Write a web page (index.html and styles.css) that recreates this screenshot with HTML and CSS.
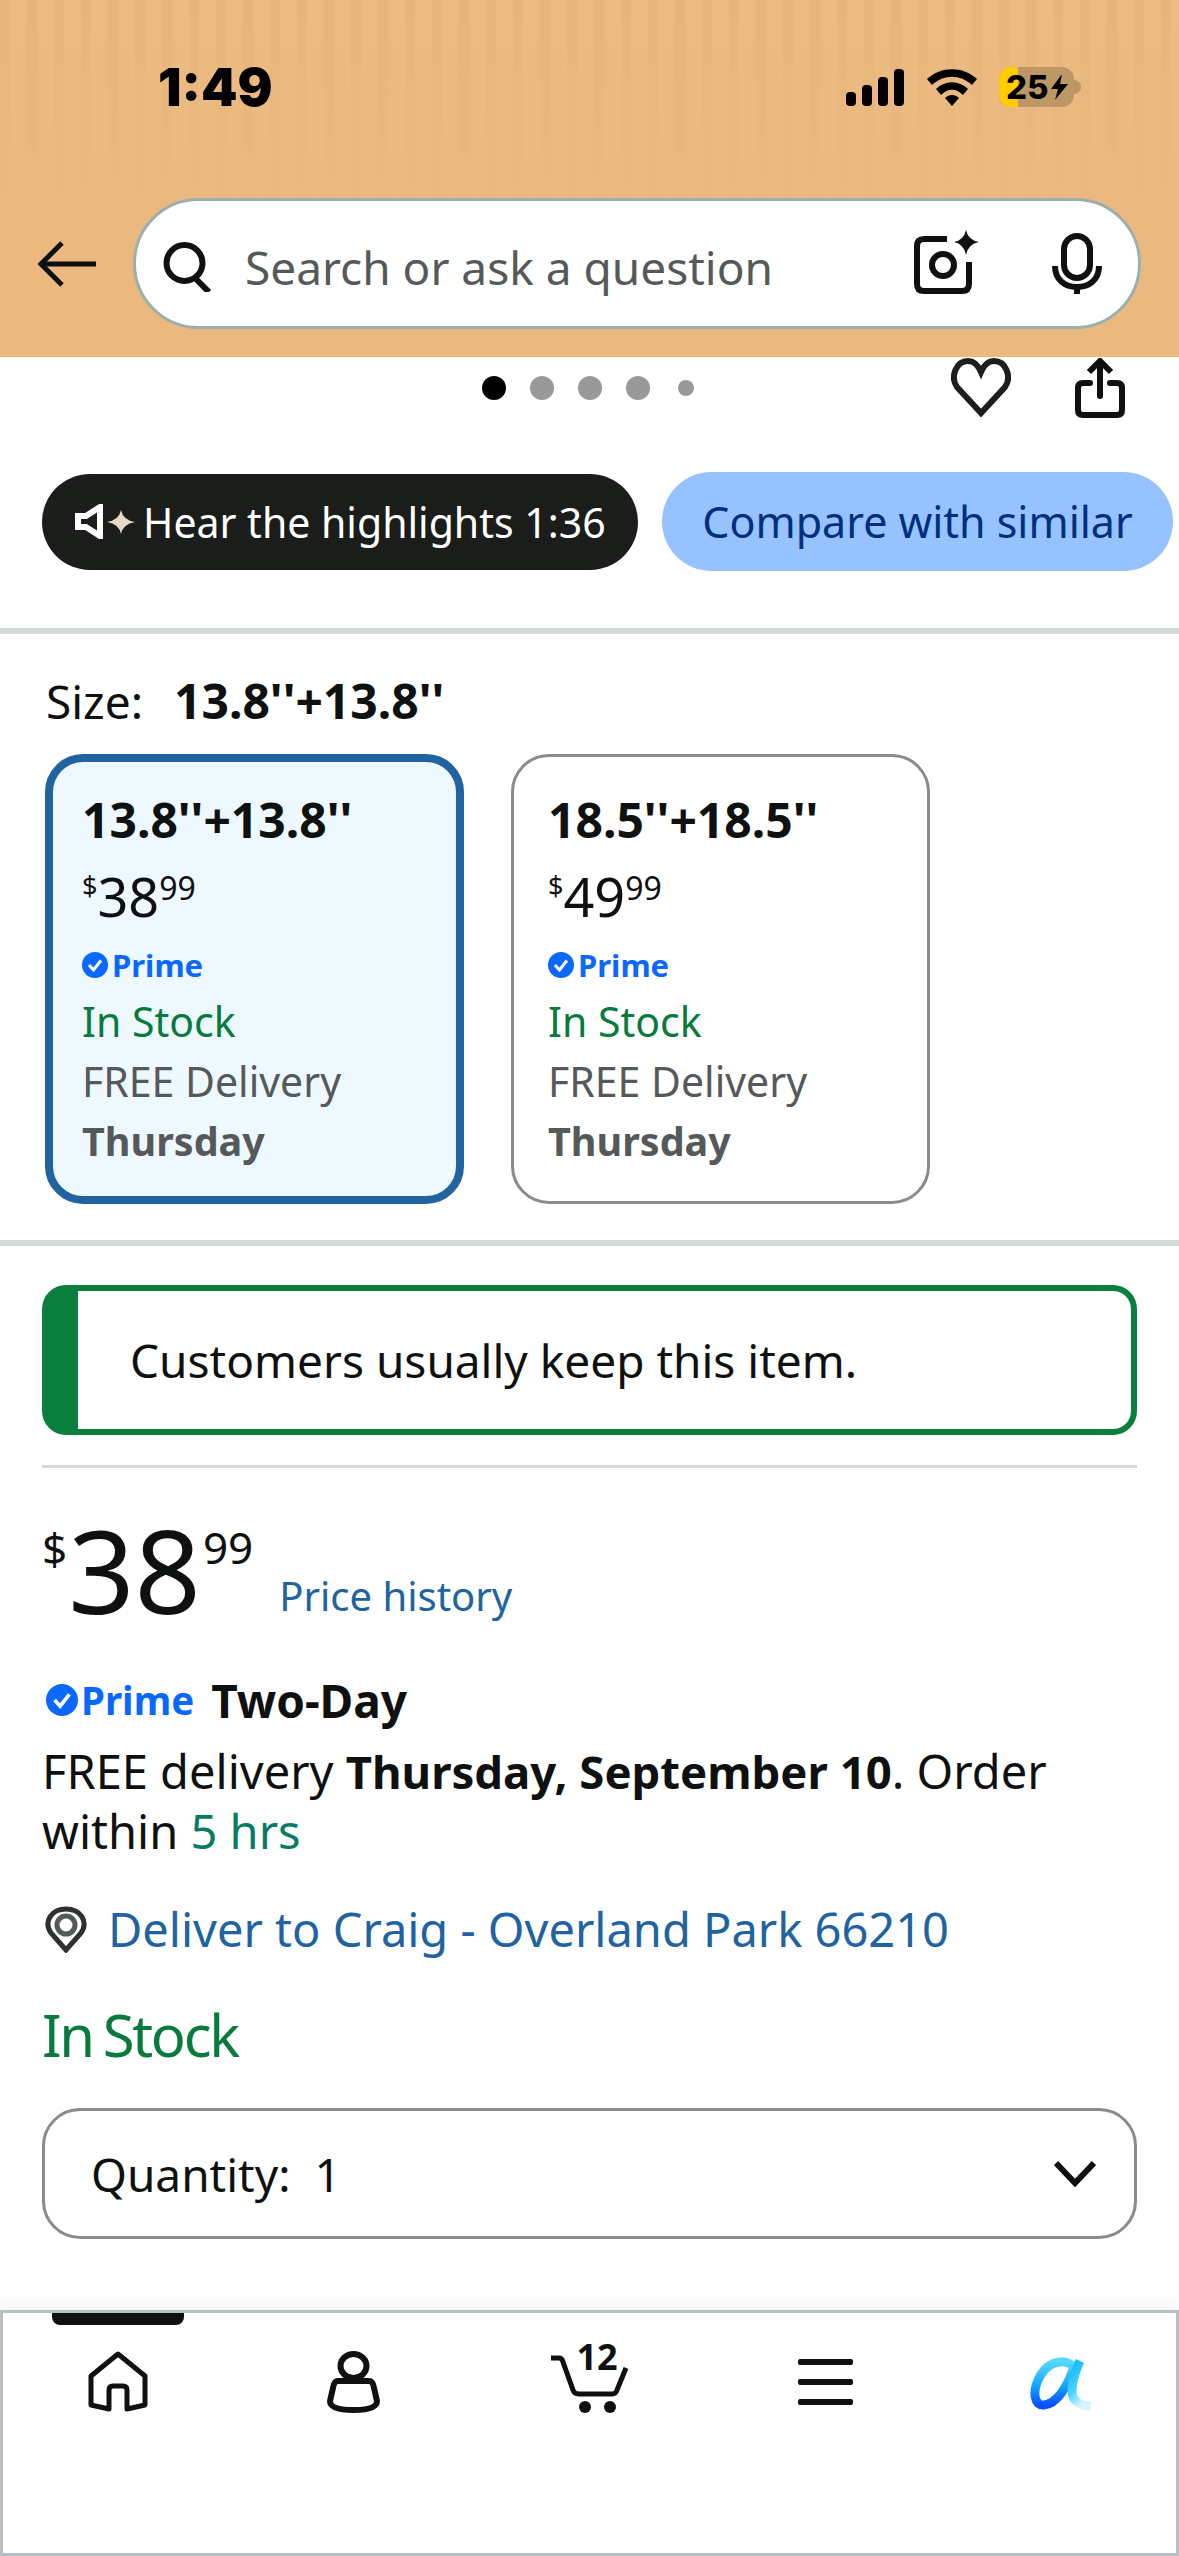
FILE: index.html
```html
<!DOCTYPE html>
<html lang="en">
<head>
    <meta charset="UTF-8">
    <meta name="viewport" content="width=device-width, initial-scale=1.0">
    <title>Product detail</title>
    <link rel="stylesheet" href="styles.css">
</head>
<body>
    <div class="page">
        <header class="top">
            <div class="status">
                <span class="time">1:49</span>
                <div class="status-icons">
                    <svg class="signal" width="58" height="37" viewBox="0 0 58 37"><rect x="0" y="23" width="10" height="14" rx="4"/><rect x="16" y="16" width="10" height="21" rx="4"/><rect x="32" y="8" width="10" height="29" rx="4"/><rect x="48" y="0" width="10" height="37" rx="4"/></svg>
                    <svg class="wifi" width="50" height="37" viewBox="0 0 50 37"><path d="M0 10 C14 -3 36 -3 50 10 L45 16 C33 5 17 5 5 16 Z"/><path d="M9 20 C18 11 32 11 41 20 L36 26 C29 19 21 19 14 26 Z"/><path d="M18 29 C22 25 28 25 32 29 L25 37 Z"/></svg>
                    <div class="battery">
                        <span class="battery-level"></span>
                        <span class="battery-text">25</span>
                        <svg class="bolt" width="17" height="26" viewBox="0 0 17 26"><path d="M11 0 L0 15 H7 L4 26 L17 10 H9 Z"/></svg>
                    </div>
                    <span class="battery-cap"></span>
                </div>
            </div>
            <div class="search-row">
                <svg class="back" width="59" height="46" viewBox="0 0 59 46" fill="none" stroke="#0f1111" stroke-width="5"><path d="M59 23 H5"/><path d="M25 2 L4 23 L25 44"/></svg>
                <div class="search-bar">
                    <svg class="search-icon" width="53" height="50" viewBox="0 0 53 50" fill="none" stroke="#0f1111" stroke-width="6"><circle cx="21.5" cy="21" r="18"/><path d="M32 36 L46 50"/></svg>
                    <span class="search-text">Search or ask a question</span>
                    <svg class="camera" width="65" height="64" viewBox="0 0 65 64" fill="none" stroke="#0f1111" stroke-width="6"><path d="M33 9 H10 Q3 9 3 16 V54 Q3 61 10 61 H48 Q55 61 55 54 V32"/><circle cx="29" cy="35" r="11"/><path d="M52 0 Q54 10 65 12 Q54 14 52 25 Q50 14 40 12 Q50 10 52 0 Z" fill="#0f1111" stroke="none"/></svg>
                    <svg class="mic" width="50" height="61" viewBox="0 0 50 61" fill="none" stroke="#0f1111" stroke-width="6"><rect x="12" y="3" width="26" height="42" rx="13"/><path d="M3 33 C3 47 13 54 25 54 C37 54 47 47 47 33"/><path d="M25 52 V61"/></svg>
                </div>
            </div>
        </header>

        <main class="content">
            <div class="actions">
                <div class="dots">
                    <span class="dot dot-active"></span>
                    <span class="dot"></span>
                    <span class="dot"></span>
                    <span class="dot"></span>
                    <span class="dot dot-small"></span>
                </div>
                <svg class="heart" width="60" height="60" viewBox="0 0 60 60" fill="none" stroke="#1c1e1e" stroke-width="6"><path d="M30 55 L6 29 C-1 19 5 3 17 3 C23 3 27 7 30 14 C33 7 37 3 43 3 C55 3 61 19 54 29 Z"/></svg>
                <svg class="share" width="50" height="60" viewBox="0 0 50 60" fill="none" stroke="#0f1111" stroke-width="6" stroke-linecap="round"><path d="M15 25 H8 Q3 25 3 30 V52 Q3 57 8 57 H42 Q47 57 47 52 V30 Q47 25 42 25 H35"/><path d="M25 5 V38"/><path d="M14 14 L25 3 L36 14" stroke-linecap="butt"/></svg>
            </div>

            <div class="pills">
                <div class="pill pill-dark">
                    <svg width="60" height="35" viewBox="0 0 60 35"><path d="M3 12 H11 L25 3 V32 L11 23 H3 Z" fill="none" stroke="#fff" stroke-width="6"/><path d="M46 6 Q48 16 60 18 Q48 20 46 30 Q44 20 32 18 Q44 16 46 6 Z" fill="#e8d9c6"/></svg>
                    <span>Hear the highlights 1:36</span>
                </div>
                <div class="pill pill-blue">Compare with similar</div>
            </div>

            <div class="divider"></div>

            <div class="size-row"><span>Size:</span><b>13.8''+13.8''</b></div>

            <div class="cards">
                <div class="card card-selected">
                    <div class="card-title">13.8''+13.8''</div>
                    <div class="card-price"><span class="cur">$</span><span>38</span><span class="cents">99</span></div>
                    <div class="prime prime-small"><svg width="26" height="26" viewBox="0 0 26 26"><circle cx="13" cy="13" r="13" fill="#0a68ff"/><path d="M7 13 L11.5 18 L19 8.5" fill="none" stroke="#fff" stroke-width="3"/></svg><span>Prime</span></div>
                    <div class="card-stock">In Stock</div>
                    <div class="card-line">FREE Delivery</div>
                    <div class="card-line card-day">Thursday</div>
                </div>
                <div class="card">
                    <div class="card-title">18.5''+18.5''</div>
                    <div class="card-price"><span class="cur">$</span><span>49</span><span class="cents">99</span></div>
                    <div class="prime prime-small"><svg width="26" height="26" viewBox="0 0 26 26"><circle cx="13" cy="13" r="13" fill="#0a68ff"/><path d="M7 13 L11.5 18 L19 8.5" fill="none" stroke="#fff" stroke-width="3"/></svg><span>Prime</span></div>
                    <div class="card-stock">In Stock</div>
                    <div class="card-line">FREE Delivery</div>
                    <div class="card-line card-day">Thursday</div>
                </div>
            </div>

            <div class="divider divider-cards"></div>

            <div class="section">
                <div class="notice">Customers usually keep this item.</div>
                <div class="rule"></div>

                <div class="price-row">
                    <span class="price-cur">$</span>
                    <span class="price-main">38</span>
                    <span class="price-cents">99</span>
                    <span class="price-link">Price history</span>
                </div>

                <div class="prime-row">
                    <div class="prime prime-large"><svg width="32" height="32" viewBox="0 0 26 26"><circle cx="13" cy="13" r="13" fill="#0a68ff"/><path d="M7 13 L11.5 18 L19 8.5" fill="none" stroke="#fff" stroke-width="3"/></svg><span>Prime</span></div>
                    <b>Two-Day</b>
                </div>
                <p class="delivery"><span>FREE delivery </span><b>Thursday, September 10</b><span>. Order </span><span>within </span><span class="hrs">5 hrs</span></p>

                <div class="deliver-to">
                    <svg width="42" height="47" viewBox="0 0 42 47" fill="none"><path d="M21 44 L6 27 C-2 15 7 3 21 3 C35 3 44 15 36 27 Z" stroke="#2f3131" stroke-width="5"/><circle cx="21" cy="19" r="9" stroke="#565959" stroke-width="5"/></svg>
                    <span>Deliver to Craig - Overland Park 66210</span>
                </div>

                <div class="stock">In Stock</div>

                <div class="quantity">
                    <span>Quantity:&nbsp; 1</span>
                    <svg width="42" height="27" viewBox="0 0 42 27" fill="none" stroke="#0f1111" stroke-width="6"><path d="M2 3 L21 23 L40 3"/></svg>
                </div>
            </div>
        </main>

        <nav class="tabs">
            <div class="tab">
                <span class="tab-marker"></span>
                <svg width="60" height="61" viewBox="0 0 60 61" fill="none" stroke="#0f1111" stroke-width="5" stroke-linejoin="round"><path d="M30 3 L3 25 V54 L21 58 V39 Q21 35 25 35 H35 Q39 35 39 39 V58 L57 54 V25 Z"/></svg>
            </div>
            <div class="tab">
                <svg width="53" height="62" viewBox="0 0 53 62" fill="none" stroke="#0f1111" stroke-width="6"><ellipse cx="26.5" cy="15" rx="13" ry="12"/><path d="M11 30 H42 Q46 30 47 37 L50 50 Q50 59 26.5 59 Q3 59 3 50 L6 37 Q7 30 11 30 Z"/></svg>
            </div>
            <div class="tab">
                <div class="cart">
                    <svg width="78" height="60" viewBox="0 0 78 60" fill="none" stroke="#0f1111" stroke-width="5"><path d="M1 5 H9 Q12 5 13 9 L23 37 Q24 41 29 41 H62 Q66 41 67 37 L76 15"/><circle cx="35" cy="54" r="6" fill="#0f1111" stroke="none"/><circle cx="60" cy="54" r="6" fill="#0f1111" stroke="none"/></svg>
                    <span class="cart-count">12</span>
                </div>
            </div>
            <div class="tab">
                <svg class="menu-icon" width="55" height="46" viewBox="0 0 55 46" fill="#0f1111"><rect width="55" height="6" rx="2"/><rect y="20" width="55" height="6" rx="2"/><rect y="40" width="55" height="6" rx="2"/></svg>
            </div>
            <div class="tab">
                <svg class="alpha-icon" width="64" height="54" viewBox="0 0 64 54" fill="none" stroke-width="9">
                    <defs>
                        <linearGradient id="bowl" x1="0" y1="0" x2="0" y2="1"><stop offset="0" stop-color="#55d9ff"/><stop offset=".55" stop-color="#13a5ff"/><stop offset="1" stop-color="#0a50ff"/></linearGradient>
                        <linearGradient id="tail" x1="0" y1="0" x2="0.4" y2="1"><stop offset="0" stop-color="#0fb6ff"/><stop offset=".6" stop-color="#46d4ff"/><stop offset="1" stop-color="#d6f5ff"/></linearGradient>
                    </defs>
                    <path d="M47 15 C43 3 22 1 11 20 C2 37 6 50 15 49 C27 48 39 32 46 7" stroke="url(#bowl)"/>
                    <path d="M51 5 C44 20 40 38 46 44 C50 49 56 50 62 50" stroke="url(#tail)"/>
                </svg>
            </div>
        </nav>
    </div>
</body>
</html>
```
FILE: styles.css
```css
* {
    box-sizing: border-box;
}
html, body {
    margin: 0;
    padding: 0;
}
body {
    font-family: "Noto Sans", Arial, sans-serif;
    color: #0f1111;
    background: white;
}
svg {
    display: block;
    flex: none;
}
.page {
    width: 1179px;
    height: 2556px;
    display: flex;
    flex-direction: column;
    overflow: hidden;
}

/* header */
.top {
    height: 357px;
    padding-top: 65px;
    background:
        linear-gradient(to bottom, rgba(235,185,127,0) 0, rgba(235,185,127,0.4) 90px, #ebb97f 210px),
        repeating-linear-gradient(90deg, #e7b67d 0, #e7b67d 10px, #ecbb82 10px, #ecbb82 27px),
        #ebb97f;
}
.status {
    height: 46px;
    display: flex;
    align-items: center;
    padding-left: 158px;
}
.time {
    font-family: "Inter", sans-serif;
    font-weight: 900;
    font-size: 52px;
    line-height: 46px;
    color: black;
}
.status-icons {
    margin-left: auto;
    margin-top: -2px;
    padding-right: 98px;
    display: flex;
    align-items: center;
}
.signal {
    margin-right: 23px;
}
.wifi {
    margin-right: 22px;
}
.battery {
    position: relative;
    width: 75px;
    height: 40px;
    border-radius: 12px;
    background: #be9767;
    overflow: hidden;
    display: flex;
    align-items: center;
    padding-left: 7px;
}
.battery-level {
    position: absolute;
    left: 0;
    top: 0;
    width: 19px;
    height: 40px;
    background: #ffcc00;
}
.battery-text {
    position: relative;
    font-family: "Inter", sans-serif;
    font-weight: 800;
    font-size: 33px;
    line-height: 40px;
    color: black;
}
.bolt {
    position: relative;
    margin-left: 2px;
}
.battery-cap {
    width: 7px;
    height: 14px;
    border-radius: 0 7px 7px 0;
    background: #be9767;
}
.search-row {
    margin-top: 87px;
    display: flex;
    align-items: center;
    padding-left: 37px;
}
.back {
    margin-right: 37px;
}
.search-bar {
    width: 1008px;
    height: 131px;
    background: white;
    border: 3px solid #9ab0b0;
    border-radius: 66px;
    display: flex;
    align-items: center;
    padding: 0 36px 0 27px;
}
.search-icon {
    margin-top: 6px;
}
.search-text {
    flex: 1;
    margin-left: 29px;
    padding-top: 6px;
    font-size: 46px;
    color: #565959;
}
.camera {
    margin-right: 73px;
    margin-top: -4px;
}

/* gallery actions */
.actions {
    height: 61px;
    display: flex;
    align-items: flex-start;
    padding-left: 482px;
    padding-right: 54px;
}
.dots {
    height: 61px;
    display: flex;
    align-items: center;
    gap: 24px;
    margin-right: auto;
}
.dot {
    width: 24px;
    height: 24px;
    border-radius: 50%;
    background: #97999b;
}
.dot-active {
    background: black;
}
.dot-small {
    width: 16px;
    height: 16px;
    margin-left: 4px;
}
.heart {
    margin-top: 1px;
    margin-right: 64px;
}
.share {
    margin-top: 1px;
}
.pills {
    margin-top: 54px;
    height: 99px;
    display: flex;
    align-items: center;
    padding-left: 42px;
    gap: 24px;
}
.pill {
    display: flex;
    align-items: center;
    border-radius: 50px;
    white-space: nowrap;
}
.pill-dark {
    width: 596px;
    height: 96px;
    padding-left: 33px;
    gap: 8px;
    font-size: 41px;
    background: #1b1d1b;
    color: white;
}
.pill-blue {
    width: 511px;
    height: 99px;
    justify-content: center;
    font-size: 43px;
    background: #96c2ff;
    color: #002f7e;
}
.divider {
    height: 6px;
    margin-top: 57px;
    background: #d5d9d9;
}
.divider-cards {
    margin-top: 36px;
}

/* size cards */
.size-row {
    margin-top: 37px;
    padding-left: 46px;
    font-size: 46px;
    line-height: 60px;
}
.size-row b {
    margin-left: 31px;
    font-size: 48px;
}
.cards {
    margin-top: 23px;
    display: flex;
    gap: 47px;
    padding-left: 45px;
}
.card {
    width: 419px;
    height: 450px;
    padding: 33px 0 0 34px;
    border: 3px solid #888c8c;
    border-radius: 38px;
}
.card-selected {
    padding: 28px 0 0 29px;
    border: 8px solid #2162a1;
    background: #edf8ff;
}
.card-title {
    font-size: 48px;
    font-weight: 700;
    line-height: 60px;
}
.card-price {
    margin-top: 16px;
    font-size: 54px;
    line-height: 60px;
    display: flex;
}
.cur {
    font-size: 27px;
    line-height: 40px;
}
.cents {
    font-size: 32px;
    line-height: 44px;
}
.prime {
    display: flex;
    align-items: center;
    color: #0a68ff;
    font-weight: 700;
}
.prime-small {
    margin-top: 19px;
    height: 40px;
    gap: 4px;
    font-size: 31px;
}
.card-stock {
    margin-top: 6px;
    font-size: 41px;
    line-height: 60px;
    color: #087a3c;
}
.card-line {
    font-size: 41px;
    line-height: 60px;
    color: #565959;
}
.card-day {
    font-size: 39.5px;
    font-weight: 700;
}

/* buy box */
.section {
    padding: 0 42px;
}
.notice {
    margin-top: 39px;
    height: 150px;
    display: flex;
    align-items: center;
    padding-left: 52px;
    font-size: 46px;
    border: 6px solid #0b7f3e;
    border-left-width: 36px;
    border-radius: 24px;
}
.rule {
    margin-top: 30px;
    height: 3px;
    background: #d5d9d9;
}
.price-row {
    margin-top: 42px;
    height: 140px;
    display: flex;
    align-items: flex-start;
}
.price-cur {
    font-size: 44px;
    line-height: 60px;
    margin-top: 8px;
    margin-right: 1px;
}
.price-main {
    font-size: 116px;
    line-height: 140px;
    margin-top: -11px;
}
.price-cents {
    font-size: 44px;
    line-height: 60px;
    margin-top: 7px;
    margin-left: 2px;
}
.price-link {
    font-size: 40px;
    line-height: 60px;
    color: #2162a1;
    margin-top: 56px;
    margin-left: 26px;
}
.prime-row {
    margin-top: 28px;
    height: 44px;
    display: flex;
    align-items: center;
    gap: 17px;
    padding-left: 4px;
    font-size: 46px;
}
.prime-large {
    gap: 3px;
    font-size: 38.5px;
}
.delivery {
    margin: 19px 0 0 0;
    font-size: 47px;
    line-height: 60px;
}
.delivery b {
    font-size: 45.5px;
}
.hrs {
    color: #067d62;
}
.deliver-to {
    margin-top: 38px;
    height: 60px;
    display: flex;
    align-items: center;
    gap: 21px;
    padding-left: 3px;
    font-size: 47px;
    color: #2162a1;
}
.stock {
    margin-top: 41px;
    font-size: 58px;
    line-height: 70px;
    letter-spacing: -2.3px;
    word-spacing: -3px;
    color: #087a3c;
}
.quantity {
    margin-top: 38px;
    height: 131px;
    display: flex;
    align-items: center;
    justify-content: space-between;
    padding: 0 38px 0 46px;
    border: 3px solid #888c8c;
    border-radius: 38px;
    font-size: 46px;
}

/* bottom tabs */
.tabs {
    margin-top: auto;
    height: 246px;
    display: grid;
    grid-template-columns: repeat(5, 1fr);
    padding-top: 41px;
    background: white;
    box-shadow: inset 0 0 0 3px #b8bfc1, 0 -8px 14px rgba(0,0,0,0.04);
}
.tab {
    position: relative;
    display: flex;
    justify-content: center;
    align-items: flex-start;
}
.tab-marker {
    position: absolute;
    top: -38px;
    left: 52px;
    width: 132px;
    height: 12px;
    border-radius: 0 0 8px 8px;
    background: #0f1111;
}
.menu-icon {
    margin-top: 8px;
}
.alpha-icon {
    margin-top: 5px;
}
.cart {
    position: relative;
    margin-top: 2px;
}
.cart-count {
    position: absolute;
    top: -13px;
    left: 26px;
    font-size: 36px;
    font-weight: 700;
    line-height: 34px;
}
```
